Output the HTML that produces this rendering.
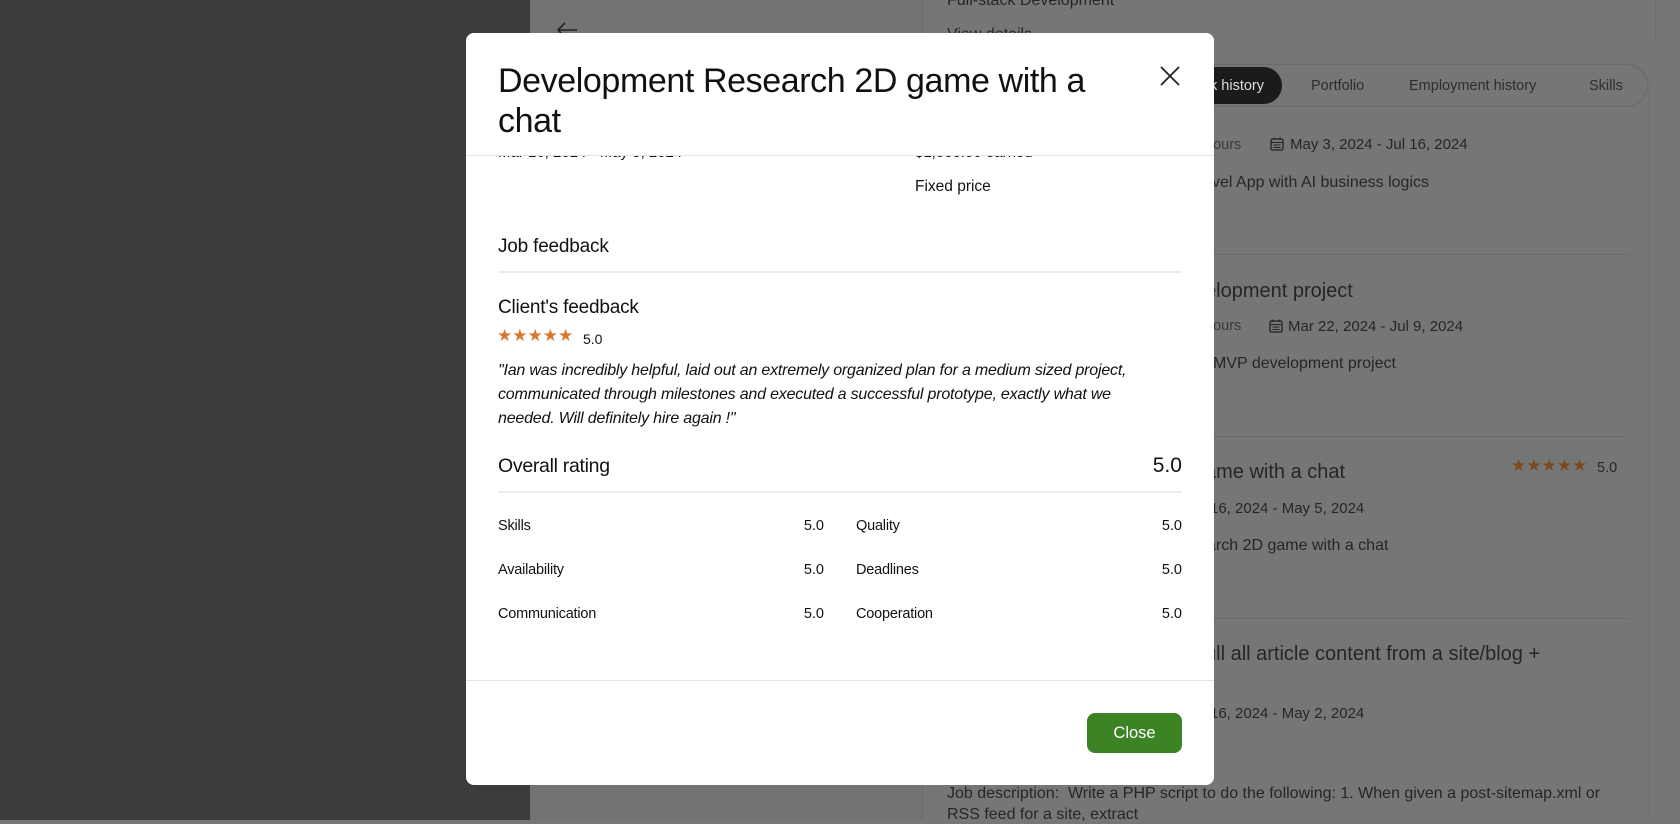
<!DOCTYPE html>
<html><head><meta charset="utf-8"><style>
*{margin:0;padding:0;box-sizing:border-box}
body{width:1680px;height:820px;overflow:hidden;position:relative;background:#767676;font-family:"Liberation Sans",Arial,sans-serif;color:#1f1f1f}
.a{position:absolute;white-space:nowrap}
.bg{color:#262626}
.m{position:absolute;left:466px;top:33px;width:748px;height:752px;background:#fff;border-radius:8px;overflow:hidden}
.m .a{color:#111}
.lab{color:#444;font-size:14.5px;letter-spacing:-0.2px}
.val{font-size:14.5px;text-align:right;width:60px}
.hr{position:absolute;height:2px;background:#ececec}
</style></head><body>
<div class="a" style="left:0;top:0;width:530px;height:820px;background:#3c3c3c"></div>
<div class="a" style="left:530px;top:0;width:392px;height:820px;background:#737373"></div>
<div class="a" style="left:922px;top:0;width:1px;height:820px;background:#6c6c6c"></div>
<div class="a" style="left:1655px;top:0;width:1px;height:40px;background:#6a6a6a"></div>
<div class="a" style="left:1649px;top:82px;width:1px;height:738px;background:#6c6c6c"></div>
<svg class="a" style="left:555px;top:20px" width="24" height="20" viewBox="0 0 24 20"><path d="M22 10H3M10 3L3 10L10 17" fill="none" stroke="#222" stroke-width="1.6"/></svg>
<div class="a bg" style="left:947px;top:-8px;font-size:16px">Full-stack Development</div>
<div class="a bg" style="left:947px;top:26px;font-size:16px">View details</div>
<div class="a" style="left:1150px;top:64px;width:498px;height:43px;border:1px solid #6a6a6a;border-radius:22px"></div>
<div class="a" style="left:1150px;top:67px;width:132px;height:37px;background:#1b1b1b;border-radius:19px"></div>
<div class="a" style="left:1210px;top:78px;font-size:14.5px;color:#ddd">k history</div>
<div class="a bg" style="left:1311px;top:78px;font-size:14.5px;color:#2e2e2e">Portfolio</div>
<div class="a bg" style="left:1409px;top:78px;font-size:14.5px;color:#2e2e2e">Employment history</div>
<div class="a bg" style="left:1589px;top:78px;font-size:14.5px;color:#2e2e2e">Skills</div>
<div class="a bg" style="left:1205px;top:137px;font-size:14.5px;color:#3a3a3a">hours</div>
<svg class="a" style="left:1270px;top:137px" width="14" height="14" viewBox="0 0 14 14"><rect x="1" y="2" width="12" height="11" rx="1.5" fill="none" stroke="#222" stroke-width="1.3"/><path d="M1 5.5H13M3.5 8H10.5M3.5 10.5H10.5M4 0.5V3M10 0.5V3" stroke="#222" stroke-width="1.1"/></svg>
<div class="a bg" style="left:1290px;top:136px;font-size:15px">May 3, 2024 - Jul 16, 2024</div>
<div class="a bg" style="left:1212px;top:174px;font-size:16px">vel App with AI business logics</div>
<div class="a" style="left:947px;top:254px;width:681px;height:1px;background:#6b6b6b"></div>
<div class="a bg" style="left:1205px;top:280px;font-size:20px">elopment project</div>
<div class="a bg" style="left:1205px;top:318px;font-size:14.5px;color:#3a3a3a">hours</div>
<svg class="a" style="left:1269px;top:319px" width="14" height="14" viewBox="0 0 14 14"><rect x="1" y="2" width="12" height="11" rx="1.5" fill="none" stroke="#222" stroke-width="1.3"/><path d="M1 5.5H13M3.5 8H10.5M3.5 10.5H10.5M4 0.5V3M10 0.5V3" stroke="#222" stroke-width="1.1"/></svg>
<div class="a bg" style="left:1288px;top:318px;font-size:15px">Mar 22, 2024 - Jul 9, 2024</div>
<div class="a bg" style="left:1213px;top:355px;font-size:16px">MVP development project</div>
<div class="a" style="left:947px;top:436px;width:681px;height:1px;background:#6b6b6b"></div>
<div class="a bg" style="left:1205px;top:461px;font-size:20px">ame with a chat</div>
<div class="a" style="left:1511px;top:456px;font-size:17px;color:#7a4a1e;letter-spacing:0px">★★★★★</div>
<div class="a bg" style="left:1597px;top:460px;font-size:14.5px">5.0</div>
<div class="a bg" style="left:1210px;top:500px;font-size:15px">16, 2024 - May 5, 2024</div>
<div class="a bg" style="left:1207px;top:537px;font-size:16px">arch 2D game with a chat</div>
<div class="a" style="left:947px;top:618px;width:681px;height:1px;background:#6b6b6b"></div>
<div class="a bg" style="left:1205px;top:643px;font-size:20px">ull all article content from a site/blog +</div>
<div class="a bg" style="left:1210px;top:705px;font-size:15px">16, 2024 - May 2, 2024</div>
<div class="a bg" style="left:947px;top:785px;font-size:16px">Job description:&nbsp; Write a PHP script to do the following: 1. When given a post-sitemap.xml or</div>
<div class="a bg" style="left:947px;top:806px;font-size:16px">RSS feed for a site, extract</div>

<div class="m">
  <div class="a" style="left:32px;top:111px;font-size:15px">Mar 16, 2024 - May 5, 2024</div>
  <div class="a" style="left:449px;top:111px;font-size:15px">$1,000.00 earned</div>
  <div style="position:absolute;left:0;top:0;width:748px;height:123px;background:#fff"></div>
  <div class="a" style="left:32px;top:28px;font-size:34px;line-height:40px;letter-spacing:-0.4px;color:#111;white-space:normal;width:620px">Development Research 2D game with a chat</div>
  <svg class="a" style="left:693px;top:32px" width="22" height="22" viewBox="0 0 22 22"><path d="M2 2L20 20M20 2L2 20" stroke="#222" stroke-width="1.8"/></svg>
  <div class="hr" style="left:0;top:122px;width:748px;height:1px;background:#e4e4e4"></div>
  <div class="a" style="left:449px;top:145px;font-size:15.5px">Fixed price</div>
  <div class="a" style="left:32px;top:203px;font-size:19px;letter-spacing:-0.2px">Job feedback</div>
  <div class="hr" style="left:32px;top:238px;width:684px"></div>
  <div class="a" style="left:32px;top:264px;font-size:19px;letter-spacing:-0.2px">Client's feedback</div>
  <div class="a" style="left:31px;top:293px;font-size:17px;color:#d9782b">★★★★★</div>
  <div class="a" style="left:117px;top:298px;font-size:14px">5.0</div>
  <div class="a" style="left:32px;top:326px;font-size:16px;line-height:24px;font-style:italic;letter-spacing:-0.2px">"Ian was incredibly helpful, laid out an extremely organized plan for a medium sized project,<br>communicated through milestones and executed a successful prototype, exactly what we<br>needed. Will definitely hire again !"</div>
  <div class="a" style="left:32px;top:422px;font-size:19.5px;letter-spacing:-0.3px">Overall rating</div>
  <div class="a" style="left:636px;top:421px;font-size:21px;width:80px;text-align:right">5.0</div>
  <div class="hr" style="left:32px;top:458px;width:684px"></div>
  <div class="a lab" style="left:32px;top:485px">Skills</div><div class="a val" style="left:298px;top:485px">5.0</div>
  <div class="a lab" style="left:390px;top:485px">Quality</div><div class="a val" style="left:656px;top:485px">5.0</div>
  <div class="a lab" style="left:32px;top:529px">Availability</div><div class="a val" style="left:298px;top:529px">5.0</div>
  <div class="a lab" style="left:390px;top:529px">Deadlines</div><div class="a val" style="left:656px;top:529px">5.0</div>
  <div class="a lab" style="left:32px;top:573px">Communication</div><div class="a val" style="left:298px;top:573px">5.0</div>
  <div class="a lab" style="left:390px;top:573px">Cooperation</div><div class="a val" style="left:656px;top:573px">5.0</div>
  <div class="hr" style="left:0;top:647px;width:748px;height:1px;background:#e4e4e4"></div>
  <div class="a" style="left:621px;top:680px;width:95px;height:40px;background:#3b8325;border-radius:8px;color:#fff;font-size:16.5px;text-align:center;line-height:40px">Close</div>
</div>
</body></html>
